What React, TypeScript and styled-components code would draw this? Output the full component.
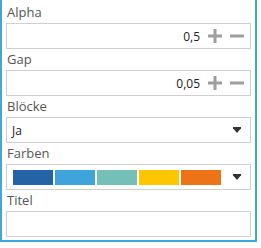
import styled, { createGlobalStyle } from "styled-components"

const GlobalStyle = createGlobalStyle`
  html, body {
    margin: 0;
    padding: 0;
    background: #ffffff;
  }
  body {
    font-family: "Open Sans", "Noto Sans", sans-serif;
  }
`

const swatches = ["#2563a8", "#3fa4dc", "#74c0b6", "#fec600", "#ec7318"]

const Panel = styled.div`
  width: 257px;
  box-sizing: border-box;
  border: 2px solid #3ba9dc;
  border-top: none;
  padding: 4px 4px 3px 4px;
  display: flex;
  flex-direction: column;
  gap: 2px;
  background: #ffffff;
`

const Field = styled.div`
  display: flex;
  flex-direction: column;
  gap: 2px;
`

const Label = styled.div`
  height: 17px;
  line-height: 17px;
  font-size: 13px;
  color: #555555;
  padding-left: 1px;
`

const Box = styled.div`
  height: 26px;
  box-sizing: border-box;
  border: 1px solid #cfcfcf;
  background: #ffffff;
  display: flex;
  align-items: center;
`

const NumberBox = styled(Box)`
  justify-content: flex-end;
  padding-right: 6px;
  gap: 8px;
`

const Value = styled.span`
  font-size: 12px;
  color: #222222;
`

const SelectBox = styled(Box)`
  padding: 0 9px 0 5px;
  justify-content: space-between;
`

const SelectText = styled.span`
  font-size: 12px;
  color: #222222;
`

const Swatches = styled.div`
  display: flex;
  gap: 2px;
  padding-left: 1px;
`

const Swatch = styled.div<{ $color: string }>`
  width: 40px;
  height: 15px;
  background: ${({ $color }) => $color};
`

const Plus = () => (
  <svg width="14" height="14" viewBox="0 0 14 14">
    <path d="M7 0v14M0 7h14" stroke="#9e9e9e" strokeWidth="3" />
  </svg>
)

const Minus = () => (
  <svg width="14" height="14" viewBox="0 0 14 14">
    <path d="M0 7h14" stroke="#9e9e9e" strokeWidth="3" />
  </svg>
)

const Caret = () => (
  <svg width="8" height="6" viewBox="0 0 8 6">
    <path d="M0 0h8v1.2L4 6 0 1.2z" fill="#333333" />
  </svg>
)

const NumberField = ({ label, value }: { label: string; value: string }) => (
  <Field>
    <Label>{label}</Label>
    <NumberBox>
      <Value>{value}</Value>
      <Plus />
      <Minus />
    </NumberBox>
  </Field>
)

export default function App() {
  return (
    <>
      <GlobalStyle />
      <Panel>
        <NumberField label="Alpha" value="0,5" />
        <NumberField label="Gap" value="0,05" />
        <Field>
          <Label>Blöcke</Label>
          <SelectBox>
            <SelectText>Ja</SelectText>
            <Caret />
          </SelectBox>
        </Field>
        <Field>
          <Label>Farben</Label>
          <SelectBox>
            <Swatches>
              {swatches.map((c) => (
                <Swatch key={c} $color={c} />
              ))}
            </Swatches>
            <Caret />
          </SelectBox>
        </Field>
        <Field>
          <Label>Titel</Label>
          <Box />
        </Field>
      </Panel>
    </>
  )
}
